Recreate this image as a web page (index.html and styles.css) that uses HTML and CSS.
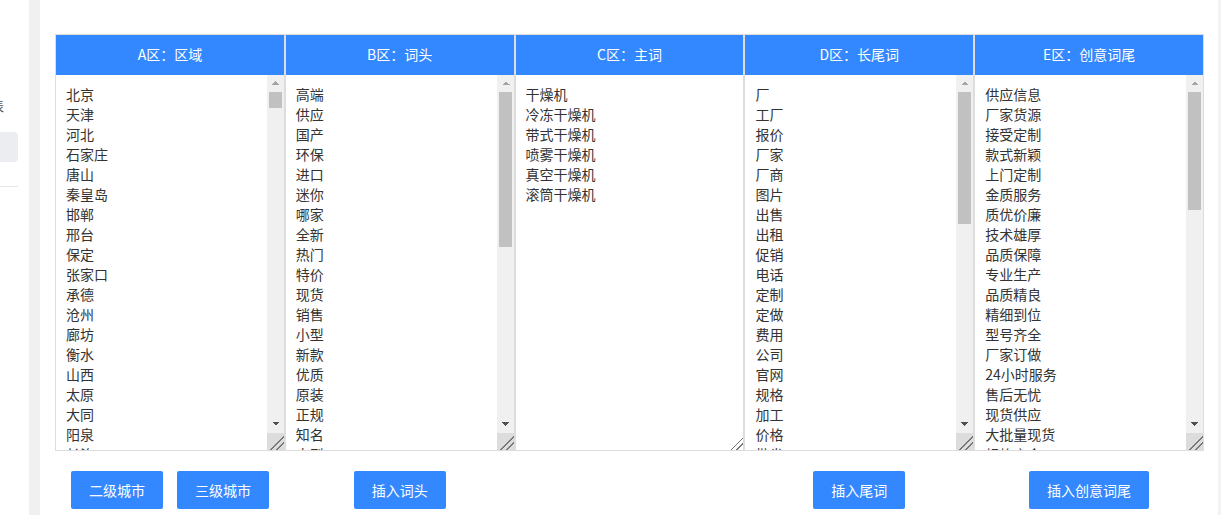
FILE: index.html
```html
<!DOCTYPE html>
<html lang="zh-CN">
<head>
  <meta charset="UTF-8" />
  <meta name="viewport" content="width=device-width, initial-scale=1.0" />
  <title>关键词组合</title>
  <link rel="stylesheet" href="styles.css">
</head>
<body>
  <div class="sidebar">
    <div class="side-label">列表</div>
    <div class="side-active"></div>
    <div class="side-line"></div>
  </div>
  <div class="gutter"></div>
  <div class="main">
    <table class="board">
      <thead>
        <tr>
          <th>A区：区域</th>
          <th>B区：词头</th>
          <th>C区：主词</th>
          <th>D区：长尾词</th>
          <th>E区：创意词尾</th>
        </tr>
      </thead>
      <tbody>
        <tr>
          <td><div class="pane"><textarea class="words" id="areaA">
北京
天津
河北
石家庄
唐山
秦皇岛
邯郸
邢台
保定
张家口
承德
沧州
廊坊
衡水
山西
太原
大同
阳泉
长治
晋城
朔州
晋中
运城
忻州
临汾
吕梁
内蒙古
呼和浩特
包头
乌海
赤峰
通辽
鄂尔多斯
呼伦贝尔
巴彦淖尔
乌兰察布
辽宁
沈阳
大连
鞍山
抚顺
本溪
丹东
锦州
营口
阜新
辽阳
盘锦
铁岭
朝阳
葫芦岛
吉林
长春
四平
辽源
通化
白山
松原
白城
黑龙江
哈尔滨
齐齐哈尔
鸡西
鹤岗
双鸭山
大庆
伊春
佳木斯
七台河
牡丹江
黑河
绥化
上海
江苏
南京
无锡
徐州
常州
苏州
南通
连云港
淮安
盐城
扬州
镇江
泰州
宿迁
浙江
杭州
宁波
温州
嘉兴
湖州
绍兴
金华
衢州
舟山
台州
丽水
安徽
合肥
芜湖
蚌埠
淮南
马鞍山
淮北
铜陵
安庆
黄山
滁州
阜阳
宿州
六安
亳州
池州
宣城
福建
福州
厦门
莆田
三明
泉州
漳州
南平
龙岩
宁德
江西
南昌
景德镇
萍乡
九江
新余
鹰潭
赣州
吉安
宜春
抚州
上饶
山东
济南
青岛
淄博
枣庄
东营
烟台
潍坊
济宁
泰安
威海
日照
临沂
德州
聊城
滨州
菏泽
河南
郑州
开封
洛阳
平顶山
安阳
鹤壁
新乡
焦作
濮阳
许昌
漯河
三门峡
南阳
商丘
信阳
周口
驻马店
湖北
武汉
黄石
十堰
宜昌
襄阳
鄂州
荆门
孝感
荆州
黄冈
咸宁
随州
湖南
长沙
株洲
湘潭
衡阳
邵阳
岳阳
常德
张家界
益阳
郴州
永州
怀化
娄底
广东
广州
韶关
深圳
珠海
汕头
佛山
江门
湛江
茂名
肇庆
惠州
梅州
汕尾
河源
阳江
清远
东莞
中山
潮州
揭阳
云浮
广西
南宁
柳州
桂林
梧州
北海
防城港
钦州
贵港
玉林
百色
贺州
河池
来宾
崇左
海南
海口
三亚
重庆
四川
成都
自贡
攀枝花
泸州
德阳
绵阳
广元
遂宁
内江
乐山
南充
眉山
宜宾
广安
达州
雅安
巴中
资阳
贵州
贵阳
六盘水
遵义
安顺
毕节
铜仁
云南
昆明
曲靖
玉溪
保山
昭通
丽江
普洱
临沧
陕西
西安
铜川
宝鸡
咸阳
渭南
延安
汉中
榆林
安康
商洛
甘肃
兰州
嘉峪关
金昌
白银
天水
武威
张掖
平凉
酒泉
庆阳
定西
陇南
青海
西宁
海东
宁夏
银川
石嘴山
吴忠
固原
中卫
新疆
乌鲁木齐
克拉玛依
吐鲁番
哈密
西藏
拉萨
日喀则
昌都
林芝
山南
那曲
香港
澳门
台湾</textarea><div class="vbar"><span class="arrow up"></span><span class="track"><span class="thumb" style="height:16px"></span></span><span class="arrow down"></span><span class="grip"></span></div></div></td>
          <td><div class="pane"><textarea class="words" id="areaB">
高端
供应
国产
环保
进口
迷你
哪家
全新
热门
特价
现货
销售
小型
新款
优质
原装
正规
知名
大型
二手
工业
节能
高效
批发
实验室
家用
商用
智能
全自动
新型
专业
定制
批量
国内
出口
直销
便宜
好用</textarea><div class="vbar"><span class="arrow up"></span><span class="track"><span class="thumb" style="height:155px"></span></span><span class="arrow down"></span><span class="grip"></span></div></div></td>
          <td><div class="pane"><textarea class="words short" id="areaC">
干燥机
冷冻干燥机
带式干燥机
喷雾干燥机
真空干燥机
滚筒干燥机</textarea></div></td>
          <td><div class="pane"><textarea class="words" id="areaD">
厂
工厂
报价
厂家
厂商
图片
出售
出租
促销
电话
定制
定做
费用
公司
官网
规格
加工
价格
批发
品牌
生产
生产厂家
供应商
哪家好
多少钱
型号
参数
原理
结构
维修
配件
安装
说明书
视频
图纸
设备
厂家直销
批发商
代理
经销商
租赁
回收
采购
市场
排名
推荐</textarea><div class="vbar"><span class="arrow up"></span><span class="track"><span class="thumb" style="height:132px"></span></span><span class="arrow down"></span><span class="grip"></span></div></div></td>
          <td><div class="pane"><textarea class="words" id="areaE">
供应信息
厂家货源
接受定制
款式新颖
上门定制
金质服务
质优价廉
技术雄厚
品质保障
专业生产
品质精良
精细到位
型号齐全
厂家订做
24小时服务
售后无忧
现货供应
大批量现货
规格齐全
货源充足
价格实惠
诚信经营
量大从优
品质优良
服务周到
值得信赖
欢迎咨询
来电咨询
发货及时
全国发货
支持定制
源头厂家
厂家直供
品质可靠
性能稳定
经久耐用
安全环保
操作简单
节能高效
性价比高
质量上乘
工艺精湛
口碑良好
信誉保证
价格优惠
按需定制
免费设计
包安装
送货上门
终身维护
技术支持</textarea><div class="vbar"><span class="arrow up"></span><span class="track"><span class="thumb" style="height:118px"></span></span><span class="arrow down"></span><span class="grip"></span></div></div></td>
        </tr>
      </tbody>
    </table>

    <div class="ops">
      <div class="ops-cell">
        <button type="button" class="btn">二级城市</button>
        <button type="button" class="btn">三级城市</button>
      </div>
      <div class="ops-cell">
        <button type="button" class="btn">插入词头</button>
      </div>
      <div class="ops-cell"></div>
      <div class="ops-cell">
        <button type="button" class="btn">插入尾词</button>
      </div>
      <div class="ops-cell">
        <button type="button" class="btn">插入创意词尾</button>
      </div>
    </div>
  </div>
  <div class="right-bar"></div>
</body>
</html>
```

FILE: styles.css
```css
html, body {
  height: 100%;
}
body {
  margin: 0;
  display: flex;
  overflow: hidden;
  background: #fff;
  color: #333;
  font-family: "Noto Sans CJK SC", "Microsoft YaHei", sans-serif;
  font-size: 14px;
}
.sidebar {
  width: 29px;
  flex: none;
  overflow: hidden;
}
.side-label {
  margin: 98px 0 0 -22px;
  font-size: 13px;
  line-height: 16px;
  color: #555;
  white-space: nowrap;
}
.side-active {
  margin-top: 18px;
  width: 18px;
  height: 30px;
  background: #ebedf0;
  border-radius: 0 4px 4px 0;
}
.side-line {
  margin-top: 24px;
  width: 18px;
  height: 1px;
  background: #e6e6e6;
}
.gutter {
  width: 11px;
  flex: none;
  background: #f0f0f0;
}
.main {
  flex: 1;
  padding: 34px 0 0 15px;
}
.right-bar {
  width: 3px;
  flex: none;
  background: #f3f3f3;
}
.board {
  width: 1149px;
  table-layout: fixed;
  border-collapse: separate;
  border-spacing: 0;
}
.board th {
  padding: 0 0 2px;
  line-height: 38px;
  background: #3388ff;
  color: #fff;
  font-weight: normal;
  border: 1px solid #ddd;
  border-bottom: 0;
}
.board td {
  padding: 0;
  vertical-align: top;
  border: 1px solid #ddd;
  border-top: 0;
}
.pane {
  display: flex;
  height: 375px;
}
.words {
  flex: 1;
  min-width: 0;
  box-sizing: border-box;
  height: 100%;
  margin: 0;
  padding: 9px 10px 10px;
  border: 0;
  outline: none;
  resize: none;
  overflow: hidden;
  color: #333;
  font-family: inherit;
  font-size: 14px;
  line-height: 20px;
  background: #fff;
}
.words.short {
  resize: both;
}
.words.short::-webkit-resizer {
  background-color: transparent;
  background-image: linear-gradient(135deg, transparent 0 57%, #777 57% 62%, transparent 62% 76%, #777 76% 81%, transparent 81%);
}

/* 仿 Windows 滚动条 */
.vbar {
  width: 17px;
  flex: none;
  display: flex;
  flex-direction: column;
  background: #f0f0f0;
}
.arrow {
  height: 17px;
  flex: none;
  background-repeat: no-repeat;
  background-size: 4px 4px;
  background-position: 5px 6px, 9px 6px;
}
.arrow.up {
  background-image:
    linear-gradient(to top left, #a3a3a3 50%, transparent 50%),
    linear-gradient(to top right, #a3a3a3 50%, transparent 50%);
}
.arrow.down {
  background-image:
    linear-gradient(to bottom left, #505050 50%, transparent 50%),
    linear-gradient(to bottom right, #505050 50%, transparent 50%);
}
.track {
  flex: 1;
  padding: 0 2px;
}
.thumb {
  display: block;
  background: #c1c1c1;
}
.grip {
  height: 17px;
  flex: none;
  background-color: #dcdcdc;
  background-image: linear-gradient(135deg, transparent 0 57%, #777 57% 62%, transparent 62% 76%, #777 76% 81%, transparent 81%);
}

.ops {
  display: grid;
  grid-template-columns: repeat(5, 229.8px);
  margin-top: 20px;
}
.ops-cell {
  display: flex;
  justify-content: center;
  gap: 14px;
}
.btn {
  height: 38px;
  padding: 0 18px;
  border: 0;
  border-radius: 2px;
  background: #3388ff;
  color: #fff;
  font-family: inherit;
  font-size: 14px;
  cursor: pointer;
}
```
